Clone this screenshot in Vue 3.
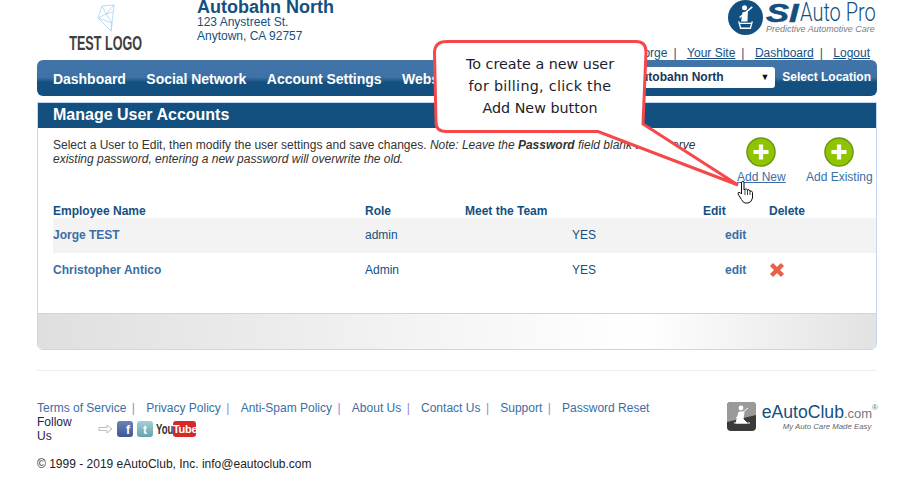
<script setup>
const navItems = ['Dashboard', 'Social Network', 'Account Settings', 'Website']
const users = [
  { name: 'Jorge TEST', role: 'admin', team: 'YES', canDelete: false },
  { name: 'Christopher Antico', role: 'Admin', team: 'YES', canDelete: true },
]
const footerLinks = ['Terms of Service', 'Privacy Policy', 'Anti-Spam Policy', 'About Us', 'Contact Us', 'Support', 'Password Reset']
</script>

<template>
  <div class="page">
    <header class="head">
      <div class="test-logo">
        <svg class="poly" width="18" height="28" viewBox="0 0 18 28" fill="none" stroke="#a9d4ee" stroke-width="0.8">
          <path d="M5 2 L17 1 L14 27 L1 14 Z M5 2 L9 10 L17 1 M9 10 L1 14 M9 10 L15 19 L1 14 M15 19 L14 27 M9 10 L16 8" />
        </svg>
        <div class="test-text">TEST LOGO</div>
      </div>
      <div class="dealer">
        <div class="dealer-name">Autobahn North</div>
        <div class="dealer-addr">123 Anystreet St.</div>
        <div class="dealer-addr">Anytown, CA 92757</div>
      </div>
      <div class="head-right">
        <div class="si-logo">
          <svg width="35" height="35" viewBox="0 0 36 36">
            <circle cx="18" cy="18" r="18" fill="#14507f" />
            <circle cx="17" cy="8" r="2.6" fill="#fff" />
            <path d="M13.5 22 L15 12.5 L20.5 11.5 L20 22 Z" fill="#fff" />
            <path d="M25 7 L12 18" stroke="#fff" stroke-width="1.6" />
            <path d="M11 22 L13 29 H23 L25 22 M12 24 H24" stroke="#fff" stroke-width="1.4" fill="none" />
          </svg>
          <div class="si-text">
            <div class="si-main"><b>SI</b><span>Auto Pro</span></div>
            <div class="si-sub">Predictive Automotive Care</div>
          </div>
        </div>
        <div class="top-links">
          <span>Welcome Jorge</span><i>|</i><a>Your Site</a><i>|</i><a>Dashboard</a><i>|</i><a>Logout</a>
        </div>
      </div>
    </header>

    <nav class="nav">
      <span v-for="item in navItems" :key="item" class="nav-item">{{ item }}</span>
      <div class="nav-right">
        <div class="select"><span>Autobahn North</span><em>▼</em></div>
        <span>Select Location</span>
      </div>
    </nav>

    <section class="panel">
      <h1 class="panel-title">Manage User Accounts</h1>
      <div class="intro">
        <p class="intro-text">
          Select a User to Edit, then modify the user settings and save changes. <i>Note: Leave the <b>Password</b> field blank to preserve existing password, entering a new password will overwrite the old.</i>
        </p>
        <div class="add-btn new">
          <svg width="30" height="30" viewBox="0 0 32 32"><circle cx="16" cy="16" r="15" fill="#8fc400" stroke="#6a9412" stroke-width="1.5" /><path d="M16 8 V24 M8 16 H24" stroke="#fff" stroke-width="4.5" /></svg>
          <a class="underline">Add New</a>
        </div>
        <div class="add-btn existing">
          <svg width="30" height="30" viewBox="0 0 32 32"><circle cx="16" cy="16" r="15" fill="#8fc400" stroke="#6a9412" stroke-width="1.5" /><path d="M16 8 V24 M8 16 H24" stroke="#fff" stroke-width="4.5" /></svg>
          <a>Add Existing</a>
        </div>
      </div>

      <div class="table">
        <div class="row header">
          <span class="c-name">Employee Name</span>
          <span class="c-role">Role</span>
          <span class="c-team">Meet the Team</span>
          <span class="c-edit">Edit</span>
          <span class="c-del">Delete</span>
        </div>
        <div v-for="(u, i) in users" :key="u.name" class="row body" :class="{ odd: i === 0 }">
          <span class="c-name uname">{{ u.name }}</span>
          <span class="c-role">{{ u.role }}</span>
          <span class="c-team yes">{{ u.team }}</span>
          <span class="c-edit elink">edit</span>
          <span class="c-del">
            <svg v-if="u.canDelete" width="16" height="16" viewBox="0 0 16 16"><path d="M2.5 2.5 L13.5 13.5 M13.5 2.5 L2.5 13.5" stroke="#e8604a" stroke-width="4.4" /></svg>
          </span>
        </div>
      </div>
      <div class="panel-foot"></div>
    </section>

    <footer class="foot">
      <div class="foot-left">
        <div class="foot-links">
          <template v-for="(l, i) in footerLinks" :key="l">
            <a>{{ l }}</a><i v-if="i < footerLinks.length - 1">|</i>
          </template>
        </div>
        <div class="follow">
          <span class="follow-text">Follow Us</span>
          <svg class="arrow" width="15" height="10" viewBox="0 0 15 10"><path d="M1 3.5 H9 V1 L14 5 L9 9 V6.5 H1 Z" fill="#fff" stroke="#bbb" stroke-width="1" /></svg>
          <span class="fb">f</span>
          <span class="tw">t</span>
          <span class="yt"><b>You</b><em>Tube</em></span>
        </div>
        <div class="copy">© 1999 - 2019 eAutoClub, Inc. info@eautoclub.com</div>
      </div>
      <div class="eauto">
        <svg width="29" height="29" viewBox="0 0 29 29">
          <rect width="29" height="29" rx="4" fill="#3a3a3a" />
          <path d="M0 4 Q0 0 4 0 H25 Q29 0 29 4 V13 L0 20 Z" fill="#9a9a9a" />
          <circle cx="14" cy="6" r="2.4" fill="#fff" />
          <path d="M9 21 L12 10 H17 L16 17 L20 21 Z M7 21 H23 M21 6 L9 16" fill="#fff" stroke="#fff" stroke-width="1" />
        </svg>
        <div class="eauto-text">
          <div class="eauto-main"><span class="ea">eAutoClub</span><span class="com">.com</span><sup>®</sup></div>
          <div class="eauto-sub">My Auto Care Made Easy</div>
        </div>
      </div>
    </footer>

    <!-- callout overlay -->
    <svg class="tail" width="919" height="495" viewBox="0 0 919 495">
      <path d="M447 41.5 H636 Q646 41.5 646 52 L643 124 L738 185 L598 131.5 H446 Q436 131.5 436 122 L434.5 53 Q434.5 41.5 447 41.5 Z" fill="#fff" stroke="#f4484a" stroke-width="3" stroke-linejoin="miter" />
    </svg>
    <div class="callout">To create a new user<br /><span class="wide">for billing, click the</span><br />Add New button</div>
    <svg class="cursor" width="18" height="24" viewBox="0 0 18 24">
      <path d="M4.5 2 Q6 0.5 7 2 V10 L8 9 Q10 8.5 10.5 10 Q12.5 9 13 11 Q15 10.5 15.5 12.5 V18 Q14.5 22.5 11 23 H8 Q6 22.5 4.5 19.5 L1 14 Q0.5 12 3 12.5 L4.5 14 Z" fill="#fff" stroke="#111" stroke-width="1" />
      <path d="M8 10 V15 M10.5 10 V15 M13 11 V15" stroke="#111" stroke-width="0.8" />
    </svg>
  </div>
</template>

<style>
html, body { margin: 0; background: #fff; }
</style>

<style scoped>
.page {
  position: relative;
  width: 919px;
  height: 495px;
  overflow: hidden;
  box-sizing: border-box;
  padding: 0 42px 0 37px;
  font-family: "Liberation Sans", Arial, sans-serif;
  font-size: 12px;
  color: #333;
}
a { color: #3a6ea5; }

.head { display: flex; height: 60px; }
.test-logo { width: 138px; margin-right: 22px; display: flex; flex-direction: column; align-items: center; padding-top: 4px; box-sizing: border-box; }
.poly { display: block; }
.test-text {
  font-weight: 700; font-size: 21px; color: #3f3f3f; line-height: 16px;
  transform: scaleX(0.6); margin-top: 3px; white-space: nowrap;
}
.dealer-name { font-size: 18px; font-weight: 700; color: #14507f; line-height: 15px; }
.dealer-addr { font-size: 12px; line-height: 14px; color: #14507f; }
.head-right { margin-left: auto; display: flex; flex-direction: column; align-items: flex-end; position: relative; }
.si-logo { display: flex; align-items: flex-start; gap: 3px; margin-right: 1px; }
.si-main { line-height: 26px; font-size: 25px; color: #14507f; display: flex; }
.si-main b { font-style: italic; font-weight: 700; width: 34px; display: block; transform: scaleX(1.38); transform-origin: left; -webkit-text-stroke: 0.5px #14507f; }
.si-main span { font-family: Roboto, "Liberation Sans", sans-serif; font-weight: 300; display: block; width: 76px; transform: scaleX(0.8); transform-origin: left; white-space: nowrap; }
.si-sub { font-size: 9px; font-style: italic; color: #7d7d7d; line-height: 8px; margin-top: -1px; white-space: nowrap; }
.top-links { position: absolute; right: 7px; top: 46px; font-size: 12px; white-space: nowrap; color: #14507f; line-height: 14px; }
.top-links a { text-decoration: underline; color: #14507f; }
.top-links i { font-style: normal; margin: 0 10.5px 0 6px; }

.nav {
  height: 36px;
  background: linear-gradient(#4274a8 0, #3e72a6 48%, #14507f 62%, #14507f 100%);
  border-radius: 6px;
  display: flex;
  align-items: center;
  padding: 1px 6px 0 16px;
  box-sizing: border-box;
  color: #fff;
  font-weight: 700;
  font-size: 14px;
  white-space: nowrap;
}
.nav-item { margin-right: 20.5px; letter-spacing: -0.03px; }
.nav-right { margin-left: auto; display: flex; align-items: center; gap: 7px; font-size: 12px; margin-top: -3px; }
.select {
  width: 150px; height: 21px; background: #fff; border-radius: 3px; color: #14375c;
  display: flex; align-items: center; justify-content: space-between; padding: 0 6px 0 7px; box-sizing: border-box;
}
.select em { font-style: normal; font-size: 9px; color: #111; }

.panel {
  margin-top: 6px; height: 248px; box-sizing: border-box;
  border: 1px solid #c2d6f5; border-radius: 0 0 6px 6px;
  display: flex; flex-direction: column;
}
.panel-title { margin: 0; height: 25px; line-height: 24px; background: #14507f; color: #fff; font-size: 16px; font-weight: 700; padding-left: 15px; flex: none; }
.intro { height: 76px; box-sizing: border-box; position: relative; padding: 10px 15px 0; flex: none; }
.intro-text { margin: 0; width: 660px; line-height: 14px; font-size: 12px; }
.add-btn { position: absolute; display: flex; flex-direction: column; align-items: center; font-size: 12px; line-height: 14px; white-space: nowrap; top: 9px; }
.add-btn svg { margin-bottom: 3px; }
.add-btn a.underline { text-decoration: underline; }
.add-btn.new { left: 699px; }
.add-btn.existing { left: 768px; }

.table { margin-left: 15px; }
.row { display: flex; align-items: center; }
.row.header { height: 14px; font-weight: 700; color: #14507f; }
.row.body { height: 35px; box-sizing: border-box; padding-bottom: 2px; }
.row.odd { background: #f3f3f3; }
.uname { font-weight: 700; color: #3a6ea5; }
.c-name { width: 312px; }
.c-role { width: 100px; color: #14507f; }
.c-team { width: 238px; }
.yes { padding-left: 107px; width: 131px; color: #14507f; }
.c-edit { width: 66px; color: #14507f; }
.elink { padding-left: 22px; width: 44px; color: #3a6ea5; font-weight: 700; }
.c-del { display: flex; align-items: center; }
.panel-foot {
  margin-top: auto; height: 35px; flex: none;
  border-top: 1px solid #c2d6f5;
  background: linear-gradient(90deg, #dfdfdf, #f8f8f8 55%, #fff 72%, #e2e2e2);
  border-radius: 0 0 5px 5px;
}

.foot { margin-top: 20px; border-top: 1px solid #eee; padding-top: 30px; display: flex; justify-content: space-between; }
.foot-links { line-height: 14px; color: #3a6ea5; white-space: nowrap; }
.foot-links i { font-style: normal; margin: 0 11.2px 0 5.5px; color: #8f86d9; }
.follow { display: flex; align-items: center; height: 28px; }
.follow-text { width: 40px; margin-right: 21px; line-height: 14px; color: #2a1a50; }
.arrow { margin-right: 4px; }
.fb, .tw { width: 16px; height: 16px; border-radius: 3px; color: #fff; font-weight: 700; font-size: 12px; display: flex; align-items: flex-end; justify-content: flex-end; padding-right: 3px; box-sizing: border-box; margin-right: 4px; line-height: 14px; }
.fb { background: linear-gradient(#6d83b5, #3b5998); }
.tw { background: linear-gradient(#a5cfd6, #66a3ad); justify-content: center; padding: 0; margin-right: 3px; }
.yt { display: flex; align-items: center; font-size: 14px; }
.yt b { color: #333; transform: scaleX(0.68); transform-origin: left; width: 17px; display: block; }
.yt em { font-style: normal; font-weight: 700; background: #d6282a; color: #fff; border-radius: 3px; width: 23px; text-align: center; line-height: 16px; font-size: 11px; letter-spacing: -0.3px; }
.copy { margin-top: 14px; color: #222; line-height: 14px; }

.eauto { display: flex; gap: 6px; margin-top: 1px; margin-right: -1px; height: 32px; align-items: flex-start; }
.eauto-main { font-size: 17.6px; color: #14507f; line-height: 17px; white-space: nowrap; margin-top: 2px; }
.com { font-size: 13px; color: #777; }
.eauto-main sup { font-size: 8px; color: #777; line-height: 0; vertical-align: 8px; }
.eauto-sub { font-size: 7.8px; font-style: italic; color: #666; margin-left: 21px; line-height: 9px; white-space: nowrap; }

.tail { position: absolute; left: 0; top: 0; pointer-events: none; }
.callout {
  position: absolute; left: 435px; top: 53px; width: 210px;
  text-align: center; font-family: "DejaVu Sans", "Noto Sans", sans-serif; font-size: 14.3px; line-height: 22px; color: #1d1d2b;
}
.wide { letter-spacing: 0.3px; }
.cursor { position: absolute; left: 737px; top: 180px; }
</style>
